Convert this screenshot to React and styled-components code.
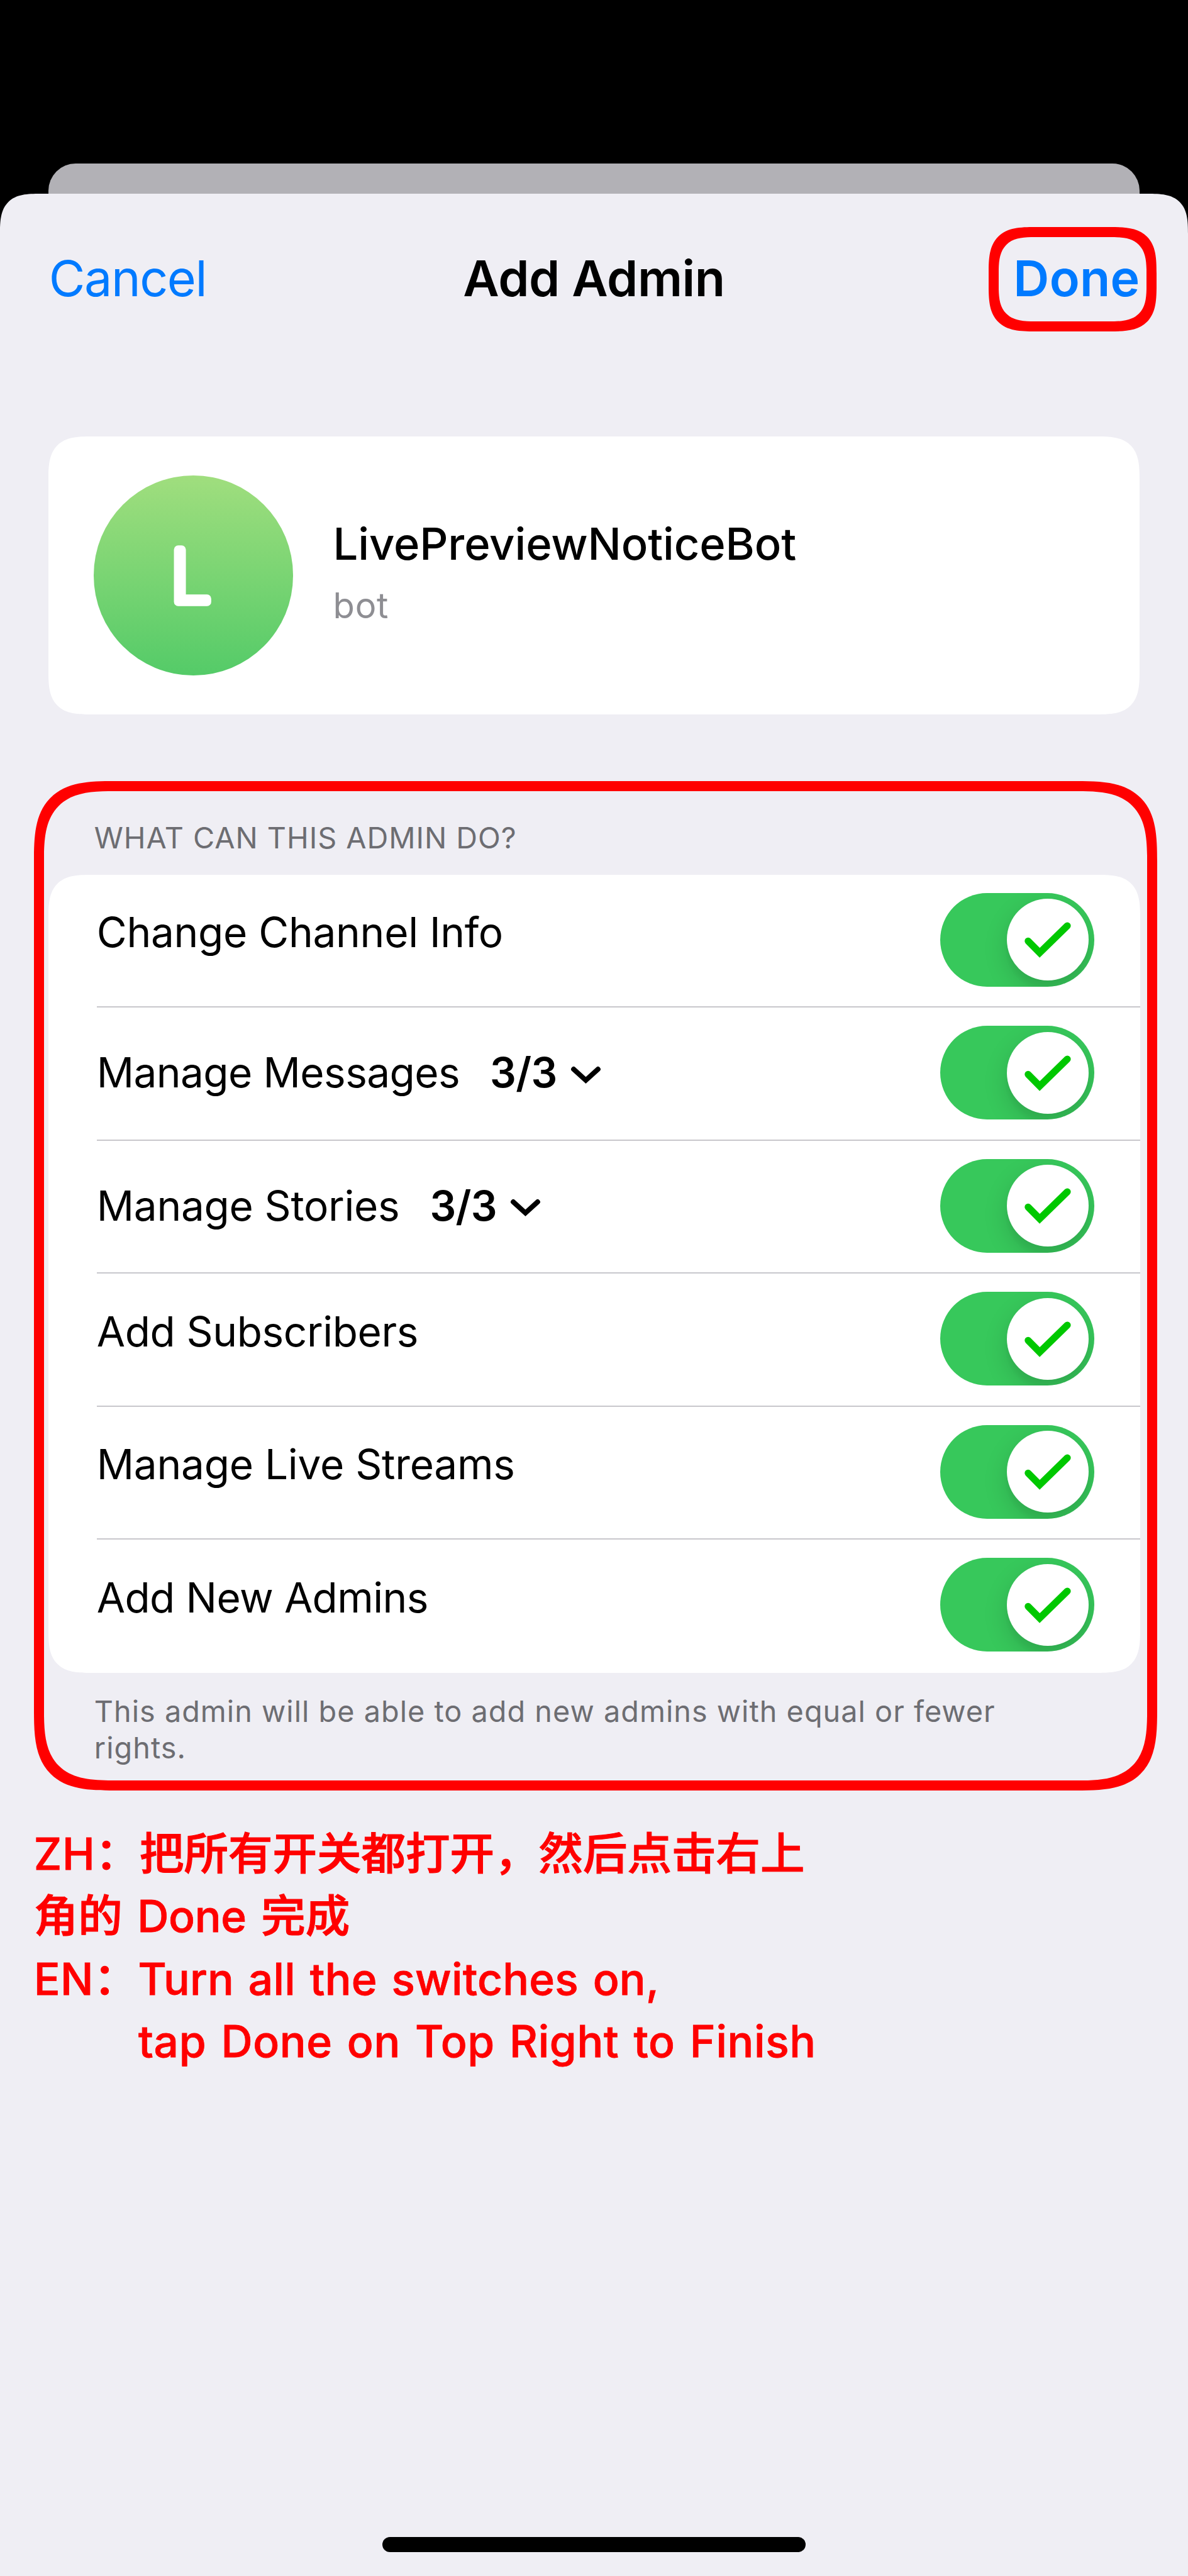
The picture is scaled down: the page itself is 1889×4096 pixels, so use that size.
import React from "react";
import styled, { createGlobalStyle, css } from "styled-components";

// Design units: 6 per iOS point, scaled to the page width.
const u = (n) => `${(n * 0.80118).toFixed(3)}px`;

const squircle = css`
  corner-shape: superellipse(1.585);
`;

const GlobalStyle = createGlobalStyle`
  html, body { margin: 0; background: #000; }
  *, *::before, *::after { box-sizing: border-box; }
  body { font-family: Inter, "Noto Sans CJK SC", sans-serif; color: #000; }
`;

const Screen = styled.div`
  display: flex;
  flex-direction: column;
  height: 4096px;
  padding-top: ${u(324)};
  overflow: hidden;
  background: #000;
`;

const SheetBehind = styled.div`
  flex: none;
  height: ${u(60)};
  margin: 0 ${u(96)};
  border-radius: ${u(54)} ${u(54)} 0 0;
  background: #b2b1b6;
`;

const Sheet = styled.main`
  flex: 1;
  display: flex;
  flex-direction: column;
  border-radius: ${u(80)} ${u(80)} 0 0;
  ${squircle}
  background: #efeef4;
`;

const NavBar = styled.header`
  display: grid;
  grid-template-columns: 1fr auto 1fr;
  align-items: center;
  height: ${u(340)};
  padding: 0 ${u(62)} 0 ${u(97)};
`;

const navText = css`
  font-family: inherit;
  font-size: ${u(98.6)};
  line-height: ${u(120)};
  white-space: nowrap;
`;

const NavButton = styled.button`
  ${navText}
  justify-self: start;
  margin: 0;
  border: 0;
  padding: 0 0 ${u(4)};
  background: none;
  color: #007aff;
  font-weight: 400;
  letter-spacing: ${u(-1.77)};
`;

const DoneButton = styled(NavButton)`
  justify-self: end;
  width: ${u(334)};
  height: ${u(208)};
  padding: 0 0 ${u(4)} ${u(29.5)};
  border: ${u(20)} solid #ff0000;
  border-radius: ${u(92)};
  ${squircle}
  font-weight: 600;
  letter-spacing: ${u(0.32)};
  text-align: left;
`;

const NavTitle = styled.h1`
  ${navText}
  margin: 0 ${u(17.5)} 0 ${u(-17.5)};
  padding-bottom: ${u(4)};
  font-weight: 600;
  letter-spacing: ${u(-0.56)};
`;

const ProfileCard = styled.section`
  display: flex;
  align-items: center;
  gap: ${u(79.5)};
  height: ${u(552)};
  margin: ${u(142)} ${u(96)} ${u(132)};
  padding-left: ${u(89.5)};
  border-radius: ${u(86)};
  ${squircle}
  background: #fff;
`;

const Avatar = styled.svg`
  flex: none;
  width: ${u(396)};
  height: ${u(396)};
  border-radius: 50%;
  background: linear-gradient(#a0de7e, #54cb68);
`;

const AvatarLetter = styled.text`
  fill: #fff;
  stroke: #fff;
  stroke-width: 17px;
  stroke-linejoin: round;
  font-size: 142px;
  font-weight: 200;
`;

const Identity = styled.div``;

const Name = styled.div`
  font-size: ${u(88)};
  font-weight: 500;
  line-height: ${u(122)};
  letter-spacing: ${u(-0.16)};
`;

const Kind = styled.div`
  color: #8e8e93;
  font-size: ${u(70)};
  line-height: ${u(124)};
  letter-spacing: ${u(0.93)};
`;

const Rights = styled.section`
  height: ${u(2004)};
  margin: 0 ${u(61)} 0 ${u(68)};
  border: ${u(20)} solid #ff0000;
  border-radius: ${u(160)};
  ${squircle}
`;

const caption = css`
  margin: 0;
  color: #6d6d72;
  font-size: ${u(58.4)};
  font-weight: 400;
`;

const RightsTitle = styled.h2`
  ${caption}
  height: ${u(166)};
  padding: ${u(52.5)} 0 0 ${u(99)};
  line-height: ${u(80)};
  letter-spacing: ${u(1.2)};
`;

const RightsNote = styled.p`
  ${caption}
  padding: ${u(42)} 0 0 ${u(99)};
  line-height: ${u(72)};
  letter-spacing: ${u(1.28)};
`;

const List = styled.ul`
  margin: 0 ${u(14)} 0 ${u(8)};
  padding: 0 0 0 ${u(96)};
  list-style: none;
  border-radius: ${u(86)};
  ${squircle}
  background: #fff;
`;

const Row = styled.li`
  display: flex;
  justify-content: space-between;
  align-items: flex-start;
  height: ${u(264)};
  padding-right: ${u(90.5)};
  border-bottom: ${u(2.5)} solid #c8c7cc;
  &:last-child {
    border-bottom: 0;
  }
`;

const Label = styled.div`
  display: flex;
  align-items: center;
  margin-top: ${(p) => (p.$expandable ? u(78.4) : u(64.4))};
  font-size: ${u(82)};
  line-height: ${u(100)};
  letter-spacing: ${(p) => u(p.$tracking)};
  white-space: nowrap;
`;

const Count = styled.span`
  margin-left: ${u(60)};
  font-weight: 600;
  letter-spacing: ${u(-0.82)};
`;

const Chevron = styled.svg`
  width: ${u(68)};
  height: ${u(44)};
  margin-left: ${u(23)};
  fill: none;
  stroke: #000;
  stroke-width: 9.8;
  stroke-linecap: round;
`;

const Switch = styled.button`
  display: flex;
  justify-content: flex-end;
  width: ${u(306)};
  height: ${u(186)};
  margin: ${u(36)} 0 0;
  padding: ${u(12)};
  border: 0;
  border-radius: ${u(93)};
  overflow: hidden;
  background: #37c85b;
`;

const Knob = styled.span`
  width: ${u(162)};
  height: ${u(162)};
  border-radius: 50%;
  background: #fff;
  box-shadow: 0 ${u(18)} ${u(48)} rgba(0, 0, 0, 0.15), 0 ${u(16)} ${u(8)} rgba(0, 0, 0, 0.03);
`;

const Check = styled.svg`
  display: block;
  width: 100%;
  height: 100%;
  fill: none;
  stroke: #00c800;
  stroke-width: 13.8;
  stroke-linecap: round;
`;

const Instructions = styled.div`
  margin: ${u(63)} 0 0 ${u(67)};
  color: #ff0000;
  font-size: ${u(88)};
  line-height: ${u(124)};
  white-space: pre;
`;

const Instruction = styled.div`
  height: ${u(124)};
  padding-left: ${(p) => u(p.$indent || 0)};
`;

const Han = styled.span`
  font-weight: 500;
  -webkit-text-stroke: ${u(1.4)} #ff0000;
`;

const Latin = styled.span`
  font-size: ${u(86.7)};
  font-weight: 500;
  -webkit-text-stroke: ${u(1)} #ff0000;
  letter-spacing: ${(p) => u(p.$tracking)};
  word-spacing: ${(p) => u(p.$words || 0)};
`;

const HomeIndicator = styled.div`
  align-self: center;
  width: ${u(840)};
  height: ${u(30)};
  margin: auto 0 ${u(48)};
  border-radius: ${u(15)};
  background: #000;
`;

const rights = [
  { label: "Change Channel Info", tracking: -0.37 },
  { label: "Manage Messages", tracking: -0.74, count: "3/3" },
  { label: "Manage Stories", tracking: -0.39, count: "3/3" },
  { label: "Add Subscribers", tracking: -0.49 },
  { label: "Manage Live Streams", tracking: -0.32 },
  { label: "Add New Admins", tracking: -0.77 },
];

function RightRow({ label, tracking, count }) {
  return (
    <Row>
      <Label $expandable={Boolean(count)} $tracking={tracking}>
        {label}
        {count && (
          <>
            <Count>{count}</Count>
            <Chevron viewBox="0 0 68 44">
              <path d="M10 15L34.3 37L58.6 15" />
            </Chevron>
          </>
        )}
      </Label>
      <Switch role="switch" aria-checked="true" aria-label={label}>
        <Knob>
          <Check viewBox="0 0 162 162">
            <path d="M42.2 84L65.1 107.3L120 53.7" />
          </Check>
        </Knob>
      </Switch>
    </Row>
  );
}

export default function App() {
  return (
    <Screen>
      <GlobalStyle />
      <SheetBehind />
      <Sheet>
        <NavBar>
          <NavButton>Cancel</NavButton>
          <NavTitle>Add Admin</NavTitle>
          <DoneButton>Done</DoneButton>
        </NavBar>

        <ProfileCard>
          <Avatar viewBox="0 0 396 396">
            <AvatarLetter x="153" y="251.5">L</AvatarLetter>
          </Avatar>
          <Identity>
            <Name>LivePreviewNoticeBot</Name>
            <Kind>bot</Kind>
          </Identity>
        </ProfileCard>

        <Rights>
          <RightsTitle>WHAT CAN THIS ADMIN DO?</RightsTitle>
          <List>
            {rights.map((r) => (
              <RightRow key={r.label} {...r} />
            ))}
          </List>
          <RightsNote>
            This admin will be able to add new admins with equal or fewer
            <br />
            rights.
          </RightsNote>
        </Rights>

        <Instructions lang="zh-CN">
          <Instruction>
            <Latin $tracking={1}>ZH</Latin>
            <Han>：把所有开关都打开，然后点击右上</Han>
          </Instruction>
          <Instruction>
            <Han>角的</Han>
            <Latin $tracking={-0.3} $words={6.5}>{" Done "}</Latin>
            <Han>完成</Han>
          </Instruction>
          <Instruction>
            <Latin $tracking={0.6}>EN</Latin>
            <Han>：</Han>
            <Latin $tracking={0.3} $words={5}>Turn all the switches on,</Latin>
          </Instruction>
          <Instruction $indent={207.5}>
            <Latin $tracking={0.82} $words={5}>tap Done on Top Right to Finish</Latin>
          </Instruction>
        </Instructions>

        <HomeIndicator />
      </Sheet>
    </Screen>
  );
}
